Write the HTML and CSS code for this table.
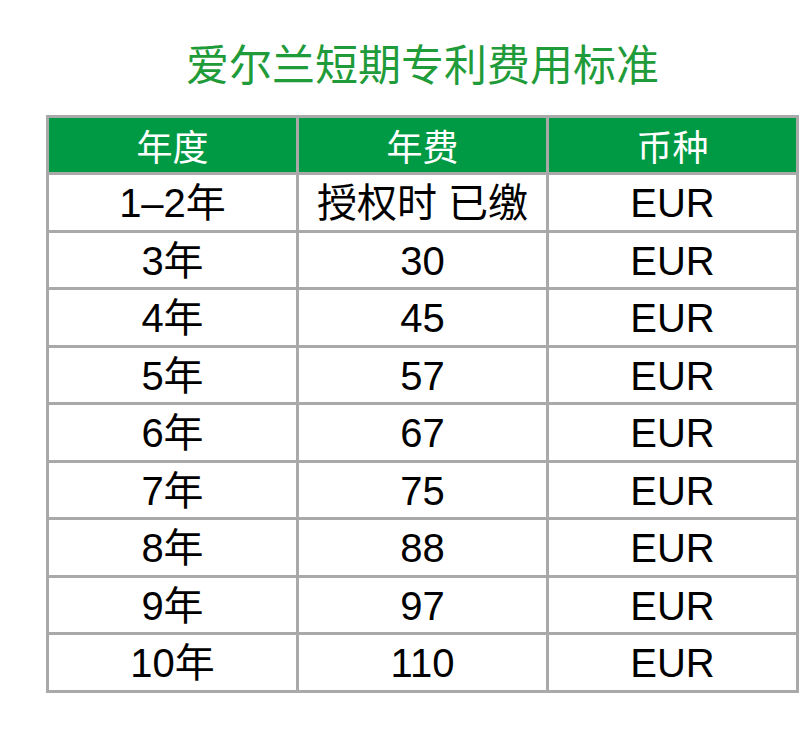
FILE: index.html
```html
<!DOCTYPE html>
<html lang="zh-CN">
<head>
<meta charset="utf-8">
<title>爱尔兰短期专利费用标准</title>
<link rel="stylesheet" href="styles.css">
</head>
<body>
<div class="page">
  <h1 class="title">爱尔兰短期专利费用标准</h1>
  <table class="fees">
    <thead>
      <tr><th>年度</th><th>年费</th><th>币种</th></tr>
    </thead>
    <tbody>
      <tr><td>1–2年</td><td>授权时&nbsp;已缴</td><td>EUR</td></tr>
      <tr><td>3年</td><td>30</td><td>EUR</td></tr>
      <tr><td>4年</td><td>45</td><td>EUR</td></tr>
      <tr><td>5年</td><td>57</td><td>EUR</td></tr>
      <tr><td>6年</td><td>67</td><td>EUR</td></tr>
      <tr><td>7年</td><td>75</td><td>EUR</td></tr>
      <tr><td>8年</td><td>88</td><td>EUR</td></tr>
      <tr><td>9年</td><td>97</td><td>EUR</td></tr>
      <tr><td>10年</td><td>110</td><td>EUR</td></tr>
    </tbody>
  </table>
</div>
</body>
</html>
```
FILE: styles.css
```css
html, body {
  margin: 0;
  padding: 0;
  background: #ffffff;
}
.page {
  width: 800px;
  height: 743px;
  padding-left: 46px;
  box-sizing: border-box;
  font-family: "Liberation Sans", "Noto Sans CJK SC", sans-serif;
}
.title {
  margin: 0;
  width: 753px;
  height: 115px;
  box-sizing: border-box;
  padding-top: 39px;
  text-align: center;
  font-family: "Noto Sans CJK SC", sans-serif;
  font-weight: normal;
  font-size: 43px;
  line-height: 46px;
  color: #1f9b3a;
}
.fees {
  border-collapse: collapse;
  width: 753px;
  table-layout: fixed;
}
.fees th, .fees td {
  border: 3px solid #a9a9a9;
  padding: 0;
  text-align: center;
  vertical-align: middle;
  line-height: 1;
}
.fees th {
  background: #009a44;
  color: #ffffff;
  font-family: "Noto Sans CJK SC", sans-serif;
  font-weight: normal;
  font-size: 36px;
  height: 54px;
}
.fees td {
  color: #000000;
  font-size: 40px;
  height: 52.5px;
  padding-top: 2px;
}
```
